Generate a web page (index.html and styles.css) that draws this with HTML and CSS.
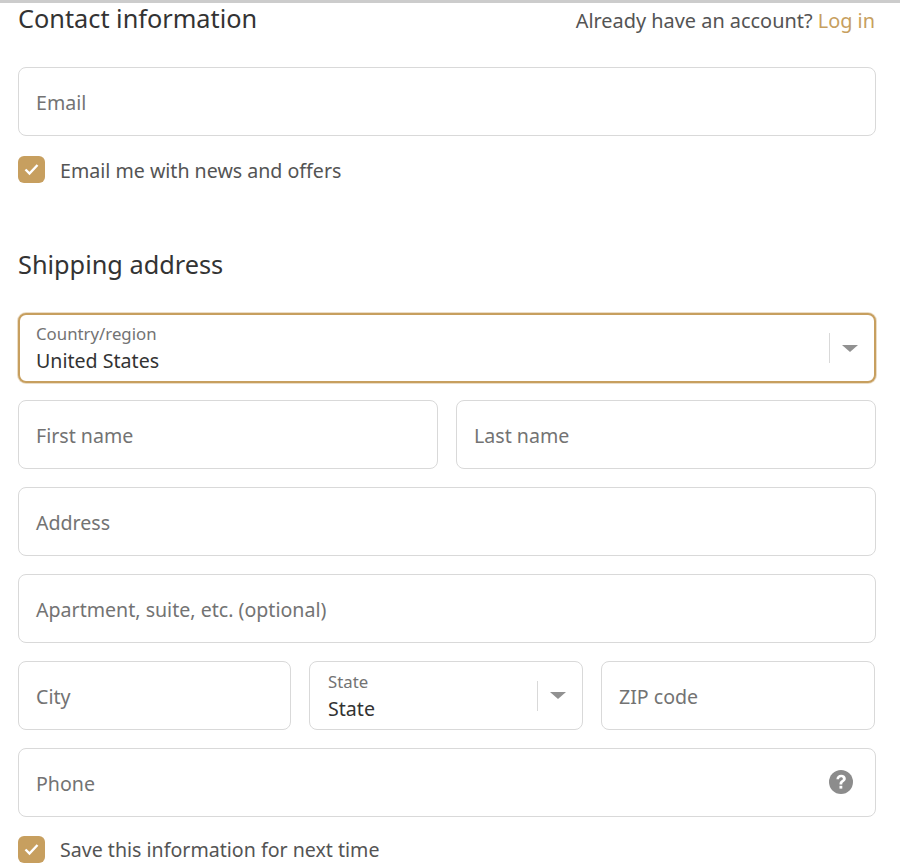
FILE: index.html
```html
<!DOCTYPE html>
<html lang="en">
<head>
<meta charset="utf-8">
<title>Checkout</title>
<link rel="stylesheet" href="styles.css">
</head>
<body>
<main class="page">
  <header class="head">
    <h2 class="title">Contact information</h2>
    <p class="login">Already have an account? <a href="#">Log in</a></p>
  </header>
  <div class="field"><span class="ph">Email</span></div>
  <label class="check check-news">
    <span class="box"><svg viewBox="0 0 27 27" width="27" height="27"><path d="M7.500 13.500l4 4 8-8.500" fill="none" stroke="#fff" stroke-width="2.400"/></svg></span>
    <span>Email me with news and offers</span>
  </label>
  <h2 class="title title-ship">Shipping address</h2>
  <div class="rows">
    <div class="field select focus">
      <div class="stack"><span class="lab">Country/region</span><span class="val">United States</span></div>
      <span class="div"></span><span class="caret"></span>
    </div>
    <div class="two">
      <div class="field"><span class="ph">First name</span></div>
      <div class="field"><span class="ph">Last name</span></div>
    </div>
    <div class="field"><span class="ph">Address</span></div>
    <div class="field"><span class="ph">Apartment, suite, etc. (optional)</span></div>
    <div class="three">
      <div class="field"><span class="ph">City</span></div>
      <div class="field select">
        <div class="stack"><span class="lab">State</span><span class="val">State</span></div>
        <span class="div"></span><span class="caret"></span>
      </div>
      <div class="field"><span class="ph">ZIP code</span></div>
    </div>
    <div class="field phone">
      <span class="ph">Phone</span>
      <svg class="help" viewBox="0 0 24 24" width="24" height="24"><circle cx="12" cy="12" r="12" fill="#8c8c8c"/><path d="M7.400 9.200C7.600 6.400 9.500 4.800 12.200 4.800c2.700 0 4.600 1.600 4.600 3.800 0 1.700-.9 2.600-2.200 3.500-1 .7-1.300 1.100-1.300 2.300h-2.800c0-1.900.5-2.800 1.800-3.800 1.100-.8 1.600-1.200 1.600-1.900 0-.9-.8-1.500-1.800-1.500-1.200 0-2 .8-2.100 2z" fill="#fff"/><rect x="10.500" y="15.800" width="2.800" height="2.800" fill="#fff"/></svg>
    </div>
  </div>
  <label class="check check-save">
    <span class="box"><svg viewBox="0 0 27 27" width="27" height="27"><path d="M7.500 13.500l4 4 8-8.500" fill="none" stroke="#fff" stroke-width="2.400"/></svg></span>
    <span>Save this information for next time</span>
  </label>
</main>
</body>
</html>
```
FILE: styles.css
```css
* { box-sizing: border-box; }
html, body { margin: 0; background: #fff; height: 868px; overflow: hidden; }
body { font-family: "Noto Sans", "Open Sans", sans-serif; color: #545454; border-top: 3px solid #ccc; }
.page { width: 876px; padding-left: 18px; }
.head { display: flex; justify-content: space-between; align-items: flex-start; height: 64px; }
.title { margin: -1px 0 0; font-size: 25.300px; font-weight: 400; line-height: 32px; color: #333; }
.login { margin: 5px 0 0; font-size: 19.900px; line-height: 26px; color: #545454; padding-right: 1px; }
.login a { color: #c79f5f; text-decoration: none; }
.field { height: 69px; border: 1px solid #d9d9d9; border-radius: 8px; background: #fff; padding: 2px 17px 0; display: flex; align-items: center; min-width: 0; }
.ph { font-size: 19.600px; color: #737373; }
.check { display: flex; align-items: center; gap: 15px; font-size: 19.600px; color: #545454; }
.check-news { margin-top: 20px; height: 27px; }
.check-news span:last-child { padding-top: 1px; }
.check-save { margin-top: 19px; height: 27px; }
.box { width: 27px; height: 27px; border-radius: 6px; background: #c79f5f; flex: none; display: block; }
.box svg { display: block; }
.title-ship { margin-top: 65px; margin-bottom: 33px; }
.rows { display: flex; flex-direction: column; gap: 18px; }
.two { display: grid; grid-template-columns: 420px 420px; gap: 18px; }
.three { display: grid; grid-template-columns: 273px 274px 274px; gap: 18px; }
.select { padding: 0 0 0 18px; }
.focus { border: 2px solid #c79f5f; height: 70px; margin-bottom: -1px; padding-left: 16px; box-shadow: 0 0 0 1px rgba(199,159,95,.35); }
.stack { flex: 1; display: flex; flex-direction: column; min-width: 0; align-self: flex-start; padding-top: 9px; }
.focus .stack { padding-top: 8px; }
.lab { font-size: 16.800px; line-height: 22px; color: #737373; }
.val { font-size: 19.600px; line-height: 32px; color: #333; }
.div { width: 1px; height: 30px; background: #d9d9d9; flex: none; }
.caret { flex: none; width: 0; height: 0; margin: 0 16px 0 12px; border-left: 8px solid transparent; border-right: 8px solid transparent; border-top: 7px solid #919191; }
.phone { justify-content: space-between; padding-right: 22px; }
.help { display: block; margin-top: -4px; }
```
